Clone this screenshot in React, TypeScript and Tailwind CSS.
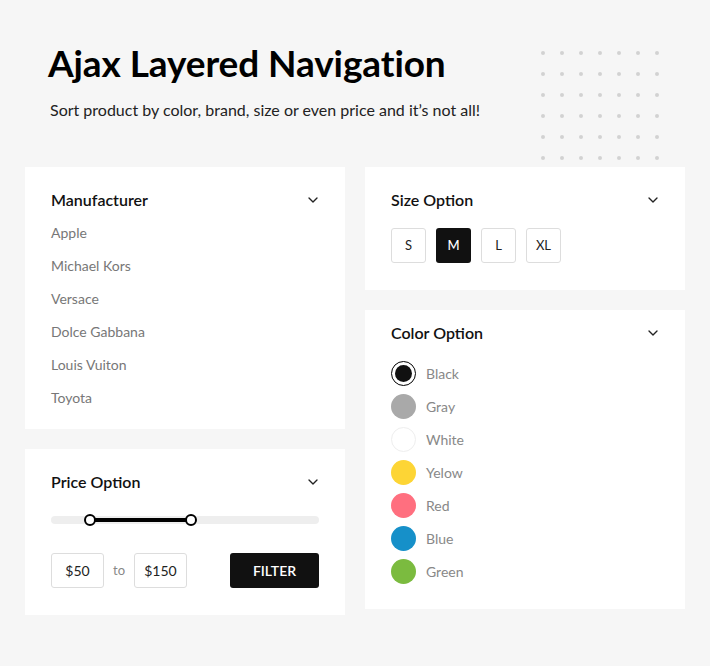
import { ChevronDown } from 'lucide-react';

const manufacturers = ['Apple', 'Michael Kors', 'Versace', 'Dolce Gabbana', 'Louis Vuiton', 'Toyota'];
const sizes = ['S', 'M', 'L', 'XL'];
const colors = [
  { name: 'Black', hex: '#111111' },
  { name: 'Gray', hex: '#a9a9a9' },
  { name: 'White', hex: '#ffffff' },
  { name: 'Yelow', hex: '#fdd535' },
  { name: 'Red', hex: '#ff6f7f' },
  { name: 'Blue', hex: '#1690c9' },
  { name: 'Green', hex: '#7bbb3f' },
];

function CardHeader({ title }: { title: string }) {
  return (
    <div className="flex items-center justify-between">
      <h3 className="text-[16px] font-semibold text-[#111]">{title}</h3>
      <ChevronDown size={16} strokeWidth={2} className="text-[#222] mr-[-2px]" />
    </div>
  );
}

function DotGrid() {
  return (
    <div className="grid grid-cols-7 gap-x-[15px] gap-y-[17px] mt-[1px]">
      {Array.from({ length: 42 }).map((_, i) => (
        <span key={i} className="block w-1 h-1 rounded-full bg-[#d2d2d2]" />
      ))}
    </div>
  );
}

export default function App() {
  return (
    <div className="w-[710px] h-[666px] bg-[#f6f6f6] font-['Lato',sans-serif] overflow-hidden">
      <div className="h-[167px] flex items-start justify-between pl-[48px] pr-[51px] pt-[50px]">
        <div className="mt-[-7px]">
          <h1 className="text-[37px] leading-[40px] font-bold text-black tracking-[-0.1px]">Ajax Layered Navigation</h1>
          <p className="mt-[15px] text-[16px] leading-[24px] text-[#222] ml-[2px]">
            Sort product by color, brand, size or even price and it’s not all!
          </p>
        </div>
        <DotGrid />
      </div>

      <div className="flex gap-[20px] px-[25px]">
        {/* Left column */}
        <div className="flex flex-col gap-[20px] w-[320px]">
          <section className="bg-white h-[262px] px-[26px] pt-[21px]">
            <CardHeader title="Manufacturer" />
            <ul className="mt-[4px] flex flex-col">
              {manufacturers.map((m) => (
                <li key={m} className="h-[33px] leading-[33px] text-[14px] text-[#777]">
                  {m}
                </li>
              ))}
            </ul>
          </section>

          <section className="bg-white h-[166px] px-[26px] pt-[21px]">
            <CardHeader title="Price Option" />
            <div className="relative mt-[22px] h-[8px] rounded-full bg-[#eeeeee]">
              <div className="absolute left-[39px] w-[101px] top-[2px] h-[4px] bg-black" />
              <span className="absolute left-[33px] top-[-2px] w-[12px] h-[12px] rounded-full border-2 border-black bg-white" />
              <span className="absolute left-[134px] top-[-2px] w-[12px] h-[12px] rounded-full border-2 border-black bg-white" />
            </div>
            <div className="mt-[29px] flex items-center">
              <div className="w-[53px] h-[35px] border border-[#ddd] rounded-[3px] flex items-center justify-center text-[14px] text-[#222]">
                $50
              </div>
              <span className="mx-[9px] text-[13px] text-[#888]">to</span>
              <div className="w-[53px] h-[35px] border border-[#ddd] rounded-[3px] flex items-center justify-center text-[14px] text-[#222]">
                $150
              </div>
              <button className="ml-auto w-[89px] h-[35px] bg-[#111] rounded-[3px] text-white text-[14px] font-semibold">
                FILTER
              </button>
            </div>
          </section>
        </div>

        {/* Right column */}
        <div className="flex flex-col gap-[20px] w-[320px]">
          <section className="bg-white h-[123px] px-[26px] pt-[21px]">
            <CardHeader title="Size Option" />
            <div className="mt-[16px] flex gap-[10px]">
              {sizes.map((s) => (
                <div
                  key={s}
                  className={
                    s === 'M'
                      ? 'w-[35px] h-[35px] rounded-[3px] bg-[#111] text-white flex items-center justify-center text-[13px] font-medium'
                      : 'w-[35px] h-[35px] rounded-[3px] border border-[#ddd] text-[#222] flex items-center justify-center text-[13px]'
                  }
                >
                  {s}
                </div>
              ))}
            </div>
          </section>

          <section className="bg-white h-[299px] px-[26px] pt-[11px]">
            <CardHeader title="Color Option" />
            <ul className="mt-[12px] flex flex-col">
              {colors.map((c) => (
                <li key={c.name} className="h-[33px] flex items-center gap-[10px]">
                  {c.name === 'Black' ? (
                    <span className="w-[25px] h-[25px] rounded-full border-[1.5px] border-black bg-white flex items-center justify-center">
                      <span className="w-[17px] h-[17px] rounded-full bg-[#111]" />
                    </span>
                  ) : (
                    <span
                      className={
                        c.name === 'White'
                          ? 'w-[25px] h-[25px] rounded-full border border-[#eee]'
                          : 'w-[25px] h-[25px] rounded-full'
                      }
                      style={{ backgroundColor: c.hex }}
                    />
                  )}
                  <span className="text-[14px] text-[#888]">{c.name}</span>
                </li>
              ))}
            </ul>
          </section>
        </div>
      </div>
    </div>
  );
}
